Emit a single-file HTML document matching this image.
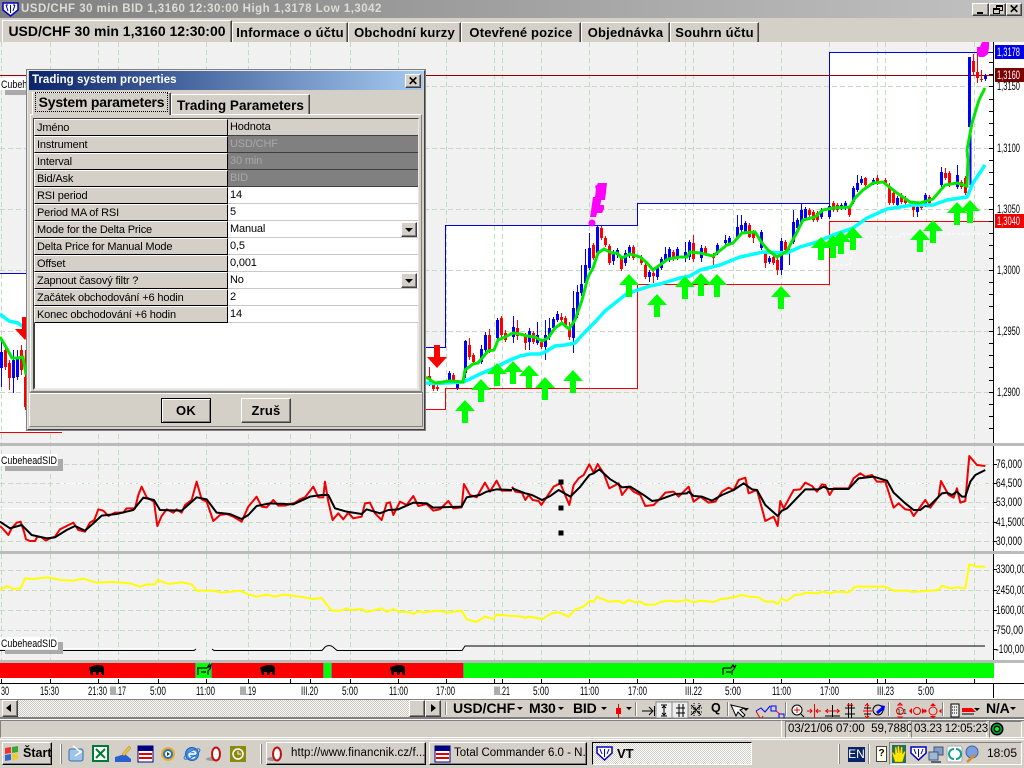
<!DOCTYPE html>
<html>
<head>
<meta charset="utf-8">
<title>VT</title>
<style>
html,body{margin:0;padding:0;width:1024px;height:768px;overflow:hidden;background:#d4d0c8;font-family:"Liberation Sans",sans-serif;color:#000}
.a{position:absolute;white-space:nowrap;box-sizing:border-box}
.raised{background:#d4d0c8;border:1px solid;border-color:#fff #404040 #404040 #fff;box-shadow:inset -1px -1px 0 #808080}
.sunk{border:1px solid;border-color:#808080 #fff #fff #808080}
.tab{background:#d4d0c8;border:1px solid;border-color:#fff #404040 #d4d0c8 #fff;border-bottom:0;box-shadow:inset -1px 0 0 #808080;font:bold 13px "Liberation Sans",sans-serif;text-align:center;letter-spacing:.18px;top:22px;height:20px;line-height:20px}
.c{font:11px/16px "Liberation Sans",sans-serif;letter-spacing:-.15px;padding-left:2px;height:17px}
.l{left:34px;width:194px;background:#d4d0c8;border:1px solid;border-color:#fff #000 #000 #fff}
.r{left:228px;width:190px;background:#fff;border-bottom:1px solid #c8c8c8}
.d{background:#808080;color:#a8a8a8;border-bottom:1px solid #404040}
.check{background:conic-gradient(#fff 25%,#d4d0c8 0 50%,#fff 0 75%,#d4d0c8 0) 0 0/2px 2px}
svg{position:absolute;left:0;top:0}
</style>
</head>
<body>

<svg width="1024" height="768" viewBox="0 0 1024 768" font-family="Liberation Sans, sans-serif">
<rect x="0" y="42" width="993" height="618" fill="#f1f1f1"/>
<rect x="993" y="42" width="31" height="641" fill="#fff"/>
<rect x="0" y="660" width="1024" height="40" fill="#fff"/>
<!-- channel fill -->
<path fill="#fff" d="M445 225H637V203H829V52H993V221H829V284H637V388H445V409H426V347H445Z"/>
<path fill="#fff" d="M0 273H62V432H0Z"/>
<!-- grid -->
<path fill="none" stroke="#c3dac3" stroke-dasharray="5 3" d="M1.5 42V660M50.5 42V660M98.5 42V660M118.5 42V660M158.5 42V660M206.5 42V660M248.5 42V660M290.5 42V660M310.5 42V660M350.5 42V660M398.5 42V660M446.5 42V660M494.5 42V660M502.5 42V660M541.5 42V660M589.5 42V660M637.5 42V660M685.5 42V660M693.5 42V660M733.5 42V660M781.5 42V660M829.5 42V660M877.5 42V660M885.5 42V660M926.5 42V660M974.5 42V660"/>
<path fill="none" stroke="#c3dac3" stroke-dasharray="5 3" d="M0 86.5H993M0 148.5H993M0 209.5H993M0 270.5H993M0 331.5H993M0 392.5H993M0 464.5H993M0 483.5H993M0 502.5H993M0 522.5H993M0 541.5H993M0 570.5H993M0 590.5H993M0 610.5H993M0 630.5H993"/>
<!-- white levels -->
<path fill="none" stroke="#fff" d="M0 508.5H985"/>
<path fill="none" stroke="#fff" stroke-dasharray="4 2" d="M0 533.5H985M60 483.5H985"/>
<path fill="none" stroke="#fff" stroke-dasharray="3 2" d="M830 265H850L853 250L860 237H900V234H990"/>
<!-- channel lines -->
<path fill="none" stroke="#0000e0" d="M426 347.5H445.5V225.5H637.5V203.5H829.5V52.5H993M0 273.5H30"/>
<path fill="none" stroke="#f00000" d="M426 409.5H445.5V388.5H637.5V284.5H829.5V221.5H993M0 432.5H62"/>
<path fill="none" stroke="#980000" d="M0 75.5H993"/>
<!-- candles -->
<g transform="translate(.5 0)" fill="none">
<path stroke="#0000ff" d="M1 340V387M13 350V393M17 350V380M449 371V382M457 380V390M465 340V378M481 345V364M485 332V352M497 318V340M513 316V343M529 328V350M537 322V345M545 320V360M549 318V340M553 317V330M557 311V322M573 291V353M577 285V318M581 265V296M585 249V285M589 233V270M597 225V256M613 250V265M617 248V258M625 250V266M629 245V258M649 270V282M657 265V280M661 257V270M665 247V262M669 247V262M677 247V260M685 242V262M689 240V260M701 245V262M717 243V255M725 235V245M729 236V245M737 215V239M741 215V232M745 221V234M761 230V250M769 256V264M781 238V275M789 248V265M793 210V244M797 218V230M801 203V225M805 207V220M821 208V219M829 204V219M841 203V210M845 201V210M853 186V204M857 175V192M861 176V185M873 178V185M897 196V207M917 205V217M925 193V207M941 167V187M957 165V189M985 74V81"/>
<path stroke="#0000ff" stroke-width="3" d="M1 352V368M13 360V378M17 357V377M449 373V380M457 382V388M465 341V373M481 349V362M485 335V350M497 320V338M513 327V337M529 331V342M537 335V343M545 335V347M549 328V337M553 319V328M557 314V320M573 308V338M577 292V315M581 284V293M585 265V283M589 248V268M597 227V253M613 254V261M617 250V255M625 253V263M629 247V255M649 272V277M657 267V277M661 259V268M665 254V260M669 249V258M677 249V257M685 252V258M689 242V257M701 248V258M717 245V253M725 240V243M729 238V243M737 227V237M741 225V230M745 223V232M761 232V248M769 258V262M781 241V270M789 250V253M793 222V242M797 220V228M801 210V223M805 209V218M821 210V217M829 206V217M841 205V208M845 203V208M853 188V202M857 183V190M861 179V183M873 180V183M897 198V205M917 207V212M925 195V205M941 172V185M957 175V187M969 57V127M985 76V79"/>
<path stroke="#0000ff" stroke-width="2" d="M970 127V185"/>
<path stroke="#ff0000" d="M5 345V370M9 360V390M21 345V375M25 350V410M429 367V386M433 383V391M437 385V391M453 373V382M469 338V360M473 353V364M489 329V353M501 316V338M505 330V342M517 320V340M525 333V350M533 331V344M541 340V349M561 313V323M565 316V327M569 322V340M593 243V260M601 226V240M605 236V247M609 244V265M621 256V271M633 245V260M641 255V265M645 263V279M653 271V283M673 250V261M693 235V262M705 246V255M713 253V267M749 223V238M753 230V243M765 251V268M773 255V265M777 258V275M785 240V252M809 208V217M813 210V222M817 211V222M833 201V212M837 203V212M849 206V217M865 177V187M877 175V185M885 178V185M889 183V205M893 191V205M901 193V204M905 196V205M913 201V217M921 203V210M929 195V205M945 168V180M949 171V187M961 180V189M965 176V195M973 54V75M977 53V83M981 70V82"/>
<path stroke="#ff0000" stroke-width="3" d="M5 350V367M9 363V378M21 350V370M25 377V407M429 376V380M433 385V389M437 387V389M453 375V380M469 345V357M473 355V362M489 335V350M501 318V335M505 333V340M517 328V336M525 335V343M533 333V342M541 342V347M561 317V320M565 318V325M569 327V337M593 245V258M601 228V238M605 238V245M609 246V263M621 258V269M633 247V258M641 257V263M645 265V277M653 273V276M673 252V259M693 243V259M705 248V253M713 255V258M749 225V237M753 232V238M765 253V263M773 257V263M777 260V270M785 242V250M809 210V215M813 212V220M817 213V220M833 203V210M837 205V210M849 208V215M865 178V185M877 178V183M885 180V183M889 188V203M893 193V203M901 195V202M905 198V203M913 203V210M921 205V208M929 197V203M945 173V178M949 173V185M961 182V187M965 178V193M973 61V72M977 72V78M981 79V80"/>
</g>
<!-- cyan MA -->
<polyline fill="none" stroke="#00ffff" stroke-width="3.5" points="0,314 9,321 18,323 26,329"/>
<polyline fill="none" stroke="#00ffff" stroke-width="3.5" points="426,383 437,383.5 463,382 470,379 480,374 490,370 500,365 510,360 520,356 530,354 540,354 545,352 555,346 565,345 575,343 585,332 595,322 605,311 615,303 625,295 635,291 650,286 660,284 670,281 680,278 690,276 700,270 720,265 740,257 763,252 787,253 800,247 817,242 833,235 853,228 867,218 887,209 913,205 933,205 947,200 967,197 973,183 985,165"/>
<!-- green MA -->
<polyline fill="none" stroke="#00e800" stroke-width="3" points="0,337 6,347 12,358 18,358 23,357 26,375"/>
<polyline fill="none" stroke="#00e800" stroke-width="3" points="426,377 435,383 450,381 463,382 465,370 473,364 478,363 483,357 488,351 494,350 498,340 505,337 513,333 520,334 527,336 535,337 542,341 548,338 555,328 562,323 569,329 575,320 582,300 588,277 593,268 598,253 604,249 612,253 617,253 622,258 630,254 640,257 647,263 653,270 660,265 668,259 680,257 687,257 690,252 700,253 713,256 727,245 733,243 742,233 755,232 762,243 768,250 777,257 787,251 797,232 803,220 815,217 823,210 833,208 850,207 855,198 863,190 873,183 883,182 897,193 910,202 920,203 933,199 945,185 957,183 967,186 968,160 967,150 972,123 979,100 985,88"/>
<!-- arrows -->
<path fill="#00ff00" d="M465 400l10 11h-7v12h-6v-12h-7zM481 379l10 11h-7v12h-6v-12h-7zM497 363l10 11h-7v12h-6v-12h-7zM513 361l10 11h-7v12h-6v-12h-7zM529 365l10 11h-7v12h-6v-12h-7zM545 377l10 11h-7v12h-6v-12h-7zM573 370l10 11h-7v12h-6v-12h-7zM629 274l10 11h-7v12h-6v-12h-7zM657 294l10 11h-7v12h-6v-12h-7zM685 276l10 11h-7v12h-6v-12h-7zM701 273l10 11h-7v12h-6v-12h-7zM717 274l10 11h-7v12h-6v-12h-7zM781 286l10 11h-7v12h-6v-12h-7zM821 237l10 11h-7v12h-6v-12h-7zM833 235l10 11h-7v12h-6v-12h-7zM841 231l10 11h-7v12h-6v-12h-7zM853 227l10 11h-7v12h-6v-12h-7zM920 229l10 11h-7v12h-6v-12h-7zM933 220l10 11h-7v12h-6v-12h-7zM957 202l10 11h-7v12h-6v-12h-7zM970 200l10 11h-7v12h-6v-12h-7z"/>
<path fill="#ff0000" d="M437 368l-10 -11h7v-12h6v12h7zM25 340l-10 -11h7v-12h6v12h4z"/>
<!-- magenta -->
<path fill="#ff00ff" d="M595 186l2 -1 1 -2h9l-1 9-1 8h-4v2l-1 3h4v4l-2 4h-5l-1 4h-6l1 -6 1 -7 1 -7h2l1 -8zM977 47h3l2 -5h7v5l-1 7-4 3h-5l-2 -4z"/>
<circle cx="592" cy="223" r="3.5" fill="#ff00ff"/>
<!-- RSI / volume -->
<g transform="translate(0 440) scale(.3333)" fill="none" stroke-linejoin="round">
<polyline stroke="#f00000" stroke-width="6" points="0,258 10,268 25,285 35,265 50,248 62,245 72,275 78,298 90,303 105,303 112,290 125,292 138,302 150,295 165,290 180,268 200,258 220,248 235,270 255,275 270,248 283,240 295,208 310,212 325,228 345,218 370,218 380,205 405,205 415,165 425,140 440,172 462,185 472,258 485,228 500,208 520,218 530,208 545,218 555,195 575,180 590,125 605,178 620,185 640,243 660,225 680,222 700,230 725,245 745,200 770,170 785,200 800,202 820,180 835,197 855,197 885,188 900,178 915,172 940,140 955,172 970,172 975,125 985,185 998,240 1015,220 1030,238 1045,218 1060,235 1085,230 1095,190 1110,188 1125,220 1145,240 1160,190 1170,187 1180,225 1200,185 1220,195 1240,168 1255,198 1280,192 1300,212 1320,208 1345,183 1360,205 1385,202 1392,132 1410,165 1430,172 1455,128 1470,155 1490,122 1505,152 1536,152"/>
<polyline stroke="#000" stroke-width="6" points="0,245 30,265 65,255 95,285 140,295 165,292 200,270 225,258 255,272 280,250 305,227 350,222 400,210 430,173 462,180 480,210 545,212 590,172 620,178 650,218 690,222 725,237 745,225 770,198 810,190 880,193 930,170 965,165 985,165 1005,205 1040,215 1085,222 1100,208 1140,220 1165,210 1195,208 1240,188 1280,190 1300,203 1385,200 1400,172 1440,165 1460,155 1490,148 1536,150"/>
<polyline stroke="#ffff00" stroke-width="6" points="0,450 20,438 40,447 62,445 75,415 100,417 130,413 150,413 180,420 220,422 250,416 290,428 340,426 390,430 420,440 440,433 465,433 472,420 505,432 545,427 575,433 590,452 640,452 665,458 720,452 745,463 770,470 800,464 825,470 850,464 900,470 940,477 965,474 995,512 1025,512 1040,505 1050,510 1085,507 1100,516 1145,505 1160,516 1180,507 1200,516 1225,516 1240,522 1260,513 1270,518 1310,512 1345,518 1385,512 1400,538 1430,546 1455,530 1480,537 1490,524 1536,528"/>
</g>
<g transform="translate(512 440) scale(.3333)" fill="none" stroke-linejoin="round">
<polyline stroke="#f00000" stroke-width="6" points="0,140 10,155 30,158 40,180 50,165 62,180 80,183 88,195 105,170 125,140 145,130 172,195 185,135 200,115 215,105 232,73 245,98 257,72 275,100 292,145 320,130 330,165 350,140 365,155 385,165 400,198 425,195 445,175 460,158 485,155 500,170 530,140 545,185 565,170 590,188 610,185 630,155 650,143 665,150 680,120 700,113 710,160 735,150 760,243 785,230 797,258 805,183 815,205 845,150 865,148 880,128 900,138 915,155 930,133 940,135 953,165 965,145 1010,145 1025,115 1045,100 1060,110 1080,105 1095,125 1120,125 1145,203 1160,190 1180,208 1195,210 1205,228 1240,180 1255,203 1280,170 1287,123 1310,165 1325,173 1335,145 1345,188 1360,183 1372,48 1395,75 1420,78"/>
<polyline stroke="#000" stroke-width="6" points="0,145 40,160 60,165 90,180 115,168 140,150 175,170 205,140 232,105 245,100 262,88 295,118 315,130 330,142 355,140 395,165 420,183 440,180 490,162 525,160 530,155 545,168 570,170 600,182 630,165 665,150 695,130 720,148 735,150 760,195 797,228 810,212 825,205 880,148 920,148 935,140 950,147 1010,147 1040,115 1085,110 1125,122 1145,158 1180,190 1205,210 1225,210 1240,198 1250,200 1290,160 1305,158 1320,165 1335,155 1350,170 1360,170 1375,125 1390,105 1420,90"/>
<polyline stroke="#ffff00" stroke-width="6" points="0,527 30,530 40,534 50,530 90,537 120,520 140,517 170,530 190,508 215,500 232,483 245,485 255,470 290,485 320,483 335,490 350,480 370,487 385,485 400,494 430,494 445,486 470,482 495,485 525,480 545,487 565,482 605,486 625,478 660,473 690,465 710,470 740,472 760,485 785,485 797,492 808,476 825,482 850,465 870,463 880,458 915,460 935,455 953,460 975,455 1010,457 1030,440 1120,440 1145,452 1190,452 1200,456 1280,450 1290,437 1315,445 1335,442 1360,445 1372,373 1395,380 1420,380"/>
</g>
<!-- squares -->
<path fill="#000" d="M558.5 479.5h5v5h-5zM558.5 505.5h5v5h-5zM558.5 530.5h5v5h-5z"/>
<!-- bottom indicator line -->
<path fill="none" stroke="#fff" d="M0 648.5H195M212 648.5H323M338 648.5H463"/>
<path fill="none" stroke="#000" d="M0 650.5H194L196 649M212 649L214 650.5H322L325 647Q329 644 333 647L337 650.5H462L465 646H985"/>
<!-- indicator labels -->
<rect x="5" y="466" width="58" height="5" fill="#aaa"/><rect x="58" y="459" width="5" height="12" fill="#aaa"/>
<rect x="0" y="454" width="57" height="12" fill="#fff"/>
<text x="1" y="464" font-size="11" textLength="56" lengthAdjust="spacingAndGlyphs">CubeheadSID</text>
<rect x="5" y="650" width="58" height="4" fill="#aaa"/><rect x="58" y="642" width="5" height="12" fill="#aaa"/>
<rect x="0" y="637" width="57" height="11" fill="#fff"/>
<text x="1" y="647" font-size="11" textLength="56" lengthAdjust="spacingAndGlyphs">CubeheadSID</text>
<rect x="5" y="90" width="21" height="5" fill="#aaa"/>
<rect x="0" y="78" width="26" height="12" fill="#fff"/>
<text x="1" y="88" font-size="11" textLength="56" lengthAdjust="spacingAndGlyphs">CubeheadSID</text>
<!-- separators -->
<rect x="0" y="443" width="1024" height="3" fill="#bbb"/>
<rect x="0" y="551" width="1024" height="3" fill="#bbb"/>
<rect x="0" y="660" width="1024" height="3" fill="#bbb"/>
<!-- price axis -->
<path stroke="#000" fill="none" d="M993.5 42V443M993.5 446V551M993.5 554V660M993.5 683V698"/>
<path stroke="#000" fill="none" d="M989 62.5h4M989 74.5h4M989 86.5h4M989 99.5h4M989 111.5h4M989 123.5h4M989 135.5h4M989 148.5h4M989 160.5h4M989 172.5h4M989 184.5h4M989 197.5h4M989 209.5h4M989 221.5h4M989 233.5h4M989 245.5h4M989 258.5h4M989 270.5h4M989 282.5h4M989 294.5h4M989 306.5h4M989 319.5h4M989 331.5h4M989 343.5h4M989 355.5h4M989 367.5h4M989 380.5h4M989 392.5h4M989 404.5h4M989 416.5h4M989 428.5h4M993 464.5h4M993 483.5h4M993 502.5h4M993 522.5h4M993 541.5h4M993 569.5h4M993 590.5h4M993 610.5h4M993 630.5h4M993 649.5h4"/>
<rect x="995" y="45" width="29" height="14" fill="#0000e8"/>
<rect x="995" y="68" width="29" height="14" fill="#7a0000"/>
<rect x="995" y="214" width="29" height="14" fill="#f00000"/>
<g font-size="11.5">
<text x="997" y="56" fill="#fff" textLength="23" lengthAdjust="spacingAndGlyphs">1,3178</text>
<text x="997" y="79" fill="#fff" textLength="23" lengthAdjust="spacingAndGlyphs">1,3160</text>
<text x="997" y="90" textLength="23" lengthAdjust="spacingAndGlyphs">1,3150</text>
<text x="997" y="152" textLength="23" lengthAdjust="spacingAndGlyphs">1,3100</text>
<text x="997" y="213" textLength="23" lengthAdjust="spacingAndGlyphs">1,3050</text>
<text x="997" y="225" fill="#fff" textLength="23" lengthAdjust="spacingAndGlyphs">1,3040</text>
<text x="997" y="274" textLength="23" lengthAdjust="spacingAndGlyphs">1,3000</text>
<text x="997" y="335" textLength="23" lengthAdjust="spacingAndGlyphs">1,2950</text>
<text x="997" y="396" textLength="23" lengthAdjust="spacingAndGlyphs">1,2900</text>
<text x="996" y="468" textLength="26" lengthAdjust="spacingAndGlyphs">76,000</text>
<text x="996" y="487" textLength="26" lengthAdjust="spacingAndGlyphs">64,500</text>
<text x="996" y="506" textLength="26" lengthAdjust="spacingAndGlyphs">53,000</text>
<text x="996" y="526" textLength="30" lengthAdjust="spacingAndGlyphs">41,5000</text>
<text x="996" y="545" textLength="26" lengthAdjust="spacingAndGlyphs">30,000</text>
<text x="996" y="573" textLength="30" lengthAdjust="spacingAndGlyphs">3300,00</text>
<text x="996" y="594" textLength="30" lengthAdjust="spacingAndGlyphs">2450,00</text>
<text x="996" y="614" textLength="30" lengthAdjust="spacingAndGlyphs">1600,00</text>
<text x="996" y="634" textLength="27" lengthAdjust="spacingAndGlyphs">750,00</text>
<text x="996" y="653" textLength="28" lengthAdjust="spacingAndGlyphs">-100,00</text>
</g>
<!-- state bar -->
<rect x="0" y="663" width="994" height="15" fill="#00ff00"/>
<path fill="#ff0000" d="M0 663H195V678H0ZM212 663H323V678H212ZM331 663H463V678H331Z"/>
<path stroke="#808080" fill="none" d="M195.5 663V678M211.5 663V678M323.5 663V678M331.5 663V678M463.5 663V678"/>
<!-- bear/bull -->
<g fill="#000">
<path d="M90 667l3 -1 3 -1 4 0 3 1 1 2 0 3 0 4h-2l-1 -3h-2l-1 3h-2l0 -3h-3l0 3h-2l-1 -4-1 -3z"/>
<path d="M261 667l3 -1 3 -1 4 0 3 1 1 2 0 3 0 4h-2l-1 -3h-2l-1 3h-2l0 -3h-3l0 3h-2l-1 -4-1 -3zM391 667l3 -1 3 -1 4 0 3 1 1 2 0 3 0 4h-2l-1 -3h-2l-1 3h-2l0 -3h-3l0 3h-2l-1 -4-1 -3z"/>
</g>
<path fill="none" stroke="#000" stroke-width="1.2" d="M197 668h10l2 -3 0 2 2 -2-1 4-2 2v4M198 668v7M201 672h5M723 668h8l2 -3 1 2 2 -2-2 4-2 2v4M723 668v7M726 672h5"/>
<!-- time axis -->
<path stroke="#000" fill="none" d="M0 683.5H1024M1.5 679V683M50.5 679V683M98.5 679V683M118.5 679V683M158.5 679V683M206.5 679V683M248.5 679V683M290.5 679V683M310.5 679V683M350.5 679V683M398.5 679V683M446.5 679V683M494.5 679V683M502.5 679V683M541.5 679V683M589.5 679V683M637.5 679V683M685.5 679V683M693.5 679V683M733.5 679V683M781.5 679V683M829.5 679V683M877.5 679V683M885.5 679V683M926.5 679V683M974.5 679V683"/>
<g font-size="11.5">
<text x="1" y="695" textLength="8" lengthAdjust="spacingAndGlyphs">30</text>
<text x="40" y="695" textLength="19" lengthAdjust="spacingAndGlyphs">15:30</text>
<text x="88" y="695" textLength="19" lengthAdjust="spacingAndGlyphs">21:30</text>
<text x="110" y="695" textLength="16" lengthAdjust="spacingAndGlyphs">III.17</text>
<text x="150" y="695" textLength="16" lengthAdjust="spacingAndGlyphs">5:00</text>
<text x="196" y="695" textLength="19" lengthAdjust="spacingAndGlyphs">11:00</text>
<text x="240" y="695" textLength="16" lengthAdjust="spacingAndGlyphs">III.19</text>
<text x="301" y="695" textLength="17" lengthAdjust="spacingAndGlyphs">III.20</text>
<text x="342" y="695" textLength="16" lengthAdjust="spacingAndGlyphs">5:00</text>
<text x="389" y="695" textLength="19" lengthAdjust="spacingAndGlyphs">11:00</text>
<text x="436" y="695" textLength="19" lengthAdjust="spacingAndGlyphs">17:00</text>
<text x="494" y="695" textLength="16" lengthAdjust="spacingAndGlyphs">III.21</text>
<text x="533" y="695" textLength="16" lengthAdjust="spacingAndGlyphs">5:00</text>
<text x="580" y="695" textLength="19" lengthAdjust="spacingAndGlyphs">11:00</text>
<text x="628" y="695" textLength="19" lengthAdjust="spacingAndGlyphs">17:00</text>
<text x="685" y="695" textLength="17" lengthAdjust="spacingAndGlyphs">III.22</text>
<text x="725" y="695" textLength="16" lengthAdjust="spacingAndGlyphs">5:00</text>
<text x="772" y="695" textLength="19" lengthAdjust="spacingAndGlyphs">11:00</text>
<text x="820" y="695" textLength="19" lengthAdjust="spacingAndGlyphs">17:00</text>
<text x="877" y="695" textLength="17" lengthAdjust="spacingAndGlyphs">III.23</text>
<text x="918" y="695" textLength="16" lengthAdjust="spacingAndGlyphs">5:00</text>
</g>
</svg>

<!-- title bar -->
<div class="a" style="left:0;top:0;width:1024px;height:18px;background:linear-gradient(90deg,#808080,#c2c2c2)"></div>
<svg width="22" height="18"><path d="M3 3H18V10L10.500 16L3 10Z" fill="#fff" stroke="#0000c0" stroke-width="1.500"/><path d="M6 5l2 6M8 5H6M10.500 5V13M13 5L15 5M15 5L13 11" stroke="#0000c0" fill="none"/></svg>
<div class="a" style="left:21px;top:2px;font:bold 11.500px/15px 'Liberation Sans',sans-serif;color:#dcdcd8;letter-spacing:.49px">USD/CHF 30 min BID 1,3160 12:30:00 High 1,3178 Low 1,3042</div>
<div class="a raised" style="left:972px;top:3px;width:17px;height:13px"><div class="a" style="left:4px;top:8px;width:6px;height:2px;background:#000"></div></div>
<div class="a raised" style="left:989px;top:3px;width:17px;height:13px"><div class="a" style="left:6px;top:1px;width:7px;height:6px;border:1px solid #000;border-top-width:2px"></div><div class="a" style="left:3px;top:4px;width:7px;height:6px;border:1px solid #000;border-top-width:2px;background:#d4d0c8"></div></div>
<div class="a raised" style="left:1006px;top:3px;width:16px;height:13px;font:bold 12px/11px 'Liberation Sans',sans-serif;text-align:center">✕</div>

<!-- tabs -->
<div class="a" style="left:0;top:18px;width:1024px;height:24px;background:#d4d0c8"></div>
<div class="a tab" style="left:2px;top:20px;width:230px;height:22px;line-height:20px;font-size:14px;letter-spacing:0">USD/CHF 30 min 1,3160 12:30:00</div>
<div class="a tab" style="left:232px;width:116px">Informace o účtu</div>
<div class="a tab" style="left:348px;width:113px">Obchodní kurzy</div>
<div class="a tab" style="left:461px;width:120px">Otevřené pozice</div>
<div class="a tab" style="left:581px;width:89px">Objednávka</div>
<div class="a tab" style="left:670px;width:89px">Souhrn účtu</div>

<!-- dialog -->
<div class="a" style="left:26px;top:69px;width:400px;height:362px;background:#d4d0c8;border:2px solid;border-color:#e8e8e4 #404040 #404040 #e8e8e4;outline:1px solid #808080;outline-offset:-1px"></div>
<div class="a" style="left:29px;top:71px;width:394px;height:19px;background:linear-gradient(90deg,#0a246a,#a6caf0);color:#fff;font:bold 11.500px/19px 'Liberation Sans',sans-serif;letter-spacing:.03px;padding-left:3px">Trading system properties</div>
<div class="a raised" style="left:405px;top:74px;width:16px;height:14px;font:bold 12px/12px 'Liberation Sans',sans-serif;text-align:center">✕</div>
<div class="a tab" style="left:32px;top:92px;width:139px;height:23px;line-height:19px;font-size:14px;letter-spacing:-.2px;z-index:2;color:#000"><span style="outline:1px dotted #000;outline-offset:1px;padding:0 2px">System parameters</span></div>
<div class="a tab" style="left:171px;top:94px;width:139px;height:21px;line-height:21px;font-size:13.500px;letter-spacing:.05px">Trading Parameters</div>
<div class="a" style="left:30px;top:114px;width:392px;height:278px;background:#d4d0c8;border:1px solid;border-color:#fff #808080 #808080 #fff"></div>
<div class="a" style="left:33px;top:118px;width:386px;height:272px;background:#fff;border:2px solid;border-color:#404040 #e8e8e4 #e8e8e4 #404040"></div>
<div class="a c l" style="top:119px">Jméno</div><div class="a c r" style="top:119px;background:#d4d0c8;border-bottom:1px solid #404040">Hodnota</div>
<div class="a c l" style="top:136px">Instrument</div><div class="a c r d" style="top:136px">USD/CHF</div>
<div class="a c l" style="top:153px">Interval</div><div class="a c r d" style="top:153px">30 min</div>
<div class="a c l" style="top:170px">Bid/Ask</div><div class="a c r d" style="top:170px">BID</div>
<div class="a c l" style="top:187px">RSI period</div><div class="a c r" style="top:187px">14</div>
<div class="a c l" style="top:204px">Period MA of RSI</div><div class="a c r" style="top:204px">5</div>
<div class="a c l" style="top:221px">Mode for the Delta Price</div><div class="a c r" style="top:221px">Manual</div>
<div class="a raised" style="left:401px;top:222px;width:16px;height:15px"><div class="a" style="left:3px;top:5px;width:0;height:0;border:4px solid transparent;border-top:4px solid #000"></div></div>
<div class="a c l" style="top:238px">Delta Price for Manual Mode</div><div class="a c r" style="top:238px">0,5</div>
<div class="a c l" style="top:255px">Offset</div><div class="a c r" style="top:255px">0,001</div>
<div class="a c l" style="top:272px">Zapnout časový filtr ?</div><div class="a c r" style="top:272px">No</div>
<div class="a raised" style="left:401px;top:273px;width:16px;height:15px"><div class="a" style="left:3px;top:5px;width:0;height:0;border:4px solid transparent;border-top:4px solid #000"></div></div>
<div class="a c l" style="top:289px">Začátek obchodování +6 hodin</div><div class="a c r" style="top:289px">2</div>
<div class="a c l" style="top:306px">Konec obchodování +6 hodin</div><div class="a c r" style="top:306px">14</div>
<div class="a" style="left:29px;top:392px;width:394px;height:35px;background:#d4d0c8;border:1px solid;border-color:#808080 #808080 #808080 #fff;box-shadow:inset 0 1px 0 #fff"></div>
<div class="a raised" style="left:161px;top:398px;width:50px;height:25px;border:1px solid #000;box-shadow:inset 1px 1px 0 #fff,inset -1px -1px 0 #808080;font:bold 13px/23px 'Liberation Sans',sans-serif;text-align:center;letter-spacing:.2px">OK</div>
<div class="a raised" style="left:241px;top:398px;width:50px;height:25px;font:bold 13px/23px 'Liberation Sans',sans-serif;text-align:center;letter-spacing:.2px">Zruš</div>

<!-- scrollbar & toolbar -->
<div class="a" style="left:0;top:699px;width:1024px;height:19px;background:#d4d0c8;border-top:1px solid #808080;border-bottom:1px solid #808080"></div>
<div class="a check" style="left:2px;top:700px;width:438px;height:17px;filter:brightness(.97)"></div>
<div class="a raised" style="left:2px;top:700px;width:16px;height:17px"><div class="a" style="left:3px;top:3px;width:0;height:0;border:4px solid transparent;border-right:5px solid #000;border-left:0"></div></div>
<div class="a raised" style="left:409px;top:700px;width:16px;height:17px"></div>
<div class="a raised" style="left:425px;top:700px;width:16px;height:17px"><div class="a" style="left:5px;top:3px;width:0;height:0;border:4px solid transparent;border-left:5px solid #000;border-right:0"></div></div>
<div class="a" style="left:445px;top:702px;width:2px;height:13px;border-left:1px solid #808080;border-right:1px solid #fff"></div>
<div class="a" style="left:453px;top:700px;font:bold 14px/17px 'Liberation Sans',sans-serif;letter-spacing:0">USD/CHF</div>
<div class="a" style="left:529px;top:700px;font:bold 14px/17px 'Liberation Sans',sans-serif;letter-spacing:-.2px">M30</div>
<div class="a" style="left:573px;top:700px;font:bold 14px/17px 'Liberation Sans',sans-serif;letter-spacing:-.2px">BID</div>
<div class="a" style="left:986px;top:700px;font:bold 14px/17px 'Liberation Sans',sans-serif;letter-spacing:-.2px">N/A</div>
<div class="a" style="left:711px;top:700px;font:bold 12.500px/17px 'Liberation Sans',sans-serif">Q</div>
<svg width="1024" height="768">
<path fill="#000" d="M517 707h6l-3 3zM558 707h6l-3 3zM601 707h6l-3 3zM626 707h6l-3 3zM1010 707h6l-3 3zM743 708h6l-3 3zM952 709h6l-3 3zM974 708h6l-3 3z"/>
<path d="M618.500 704V718" stroke="#f00000"/><rect x="616" y="708" width="5" height="6" fill="#f00000"/>
<path stroke="#808080" fill="none" d="M635.500 702V716M727.500 702V716M785.500 702V716M888.500 702V716M942.500 702V716"/>
<path stroke="#fff" fill="none" d="M636.500 702V716M728.500 702V716M786.500 702V716M889.500 702V716M943.500 702V716"/>
<path stroke="#000" fill="none" d="M642 711h10M649 707l4 4-4 4M654.500 706V716"/>
<rect x="656" y="702" width="16" height="16" fill="#eee" stroke="#888"/><rect x="672" y="702" width="16" height="16" fill="#eee" stroke="#888"/>
<path stroke="#000" fill="none" d="M661 705h6M661 716h6M664 705V716M662 708l2 -2 2 2M662 713l2 2 2 -2M676 708h9M676 713h9M679 704V717M683 704V717M691 705l10 10M701 705l-10 10"/>
<path stroke="#000" stroke-dasharray="1 1" fill="none" d="M691 708H703M691 712H703M694 703V716M699 703V716"/>
<path fill="#fff" stroke="#000" d="M731 705l5 11 2 -4 5 5 2 -2-5 -5 4 -2z"/>
<path fill="none" stroke="#f00000" d="M756 711l5 9 2 -4"/><path fill="none" stroke="#0000ff" d="M756 711l5 -3 4 4 5 -6"/>
<rect x="771" y="706" width="5" height="5" fill="none" stroke="#0000ff"/><rect x="779" y="714" width="5" height="5" fill="none" stroke="#0000ff"/><path stroke="#f00000" d="M776 711l4 3"/>
<circle cx="797" cy="710" r="5" fill="#fff" stroke="#000"/><path stroke="#f00000" d="M794 710h6M797 707v6"/><path stroke="#000" d="M801 714l3 3"/>
<path stroke="#f00000" fill="none" d="M807 711h5M821 711h-5M810 709l2 2-2 2M818 709l-2 2 2 2M814.500 704V718M825 711h15M828 709l-2 2 2 2M837 709l2 2-2 2"/><path stroke="#000" d="M832.500 705V717M825 716h15"/>
<path stroke="#000" fill="none" d="M848.500 703V719M851.500 703V719M845 708h10M845 714h10"/><path stroke="#f00000" fill="none" d="M847 706l1.500 -2 1.500 2M850 706l1.500 -2 1.500 2"/>
<path stroke="#f00000" fill="none" d="M867.500 703V719M863 711h9M865 706l2 -2 2 2M865 716l2 2 2 -2"/><path stroke="#000" fill="none" d="M864 708h7M864 714h7"/>
<circle cx="878" cy="710" r="5" fill="none" stroke="#000"/><path stroke="#0000ff" stroke-width="3" d="M877 713l6 -5"/><path fill="#0000ff" d="M880 705l5 1-1 5z"/>
<path stroke="#f00000" fill="none" d="M900 703l-2 2h4zM898 717h4l-2 2z"/><circle cx="900" cy="711" r="3.500" fill="none" stroke="#f00000"/><text x="897" y="714" font-size="7" font-family="Liberation Sans">1:1</text>
<circle cx="917" cy="711" r="3.500" fill="none" stroke="#f00000"/><path fill="#f00000" d="M909 711l3 -3v6zM925 711l-3 -3v6z"/>
<circle cx="933" cy="711" r="4" fill="none" stroke="#f00000"/><path fill="#f00000" d="M933 703l-3 3h6zM933 719l-3 -3h6zM927 711l-2.500 -2.500v5zM939 711l2.500 -2.500v5z"/>
<rect x="951" y="704" width="8" height="13" fill="#eee" stroke="#000"/><path stroke="#000" stroke-dasharray="1 1" d="M952 707h6M952 710h6M952 713h6"/>
<path fill="#f00000" d="M962 708h10l4 4h-14z"/>
<path stroke="#000" d="M962 714h12"/>
</svg>

<!-- status bar -->
<div class="a" style="left:0;top:720px;width:1024px;height:18px;background:#d4d0c8;border-top:1px solid #808080;border-left:1px solid #808080;border-bottom:1px solid #fff"></div>
<div class="a" style="left:0;top:718px;width:1024px;height:2px;background:#d4d0c8;border-bottom:1px solid #fff;border-top:1px solid #808080"></div>
<div class="a" style="left:0;top:720px;width:782px;height:18px;border-bottom:1px solid #fff;border-top:1px solid #808080;border-left:1px solid #808080;border-right:1px solid #fff"></div>
<div class="a sunk" style="left:785px;top:721px;width:124px;height:17px;font:11.500px/15px 'Liberation Sans',sans-serif;padding-left:2px">03/21/06 07:00&nbsp; 59,7880</div>
<div class="a sunk" style="left:911px;top:721px;width:76px;height:17px;font:11.500px/15px 'Liberation Sans',sans-serif;padding-left:2px;letter-spacing:-.2px">03.23 12:05:23</div>
<div class="a sunk" style="left:989px;top:721px;width:33px;height:17px"></div>
<svg width="1024" height="768"><circle cx="997" cy="729" r="6.500" fill="#000"/><circle cx="997" cy="729" r="5" fill="#0a4"/><circle cx="997" cy="729" r="3.500" fill="#000"/><circle cx="997" cy="729" r="2" fill="#0f0"/></svg>

<!-- taskbar -->
<div class="a" style="left:0;top:739px;width:1024px;height:29px;background:#d4d0c8;border-top:1px solid #fff"></div>
<div class="a raised" style="left:2px;top:742px;width:50px;height:23px;font:bold 12.500px/21px 'Liberation Sans',sans-serif;padding-left:20px;border-color:#fff #000 #000 #fff">Štart</div>
<div class="a" style="left:60px;top:744px;width:2px;height:20px;border-left:1px solid #fff;border-right:1px solid #808080;background:#fff"></div>
<div class="a" style="left:260px;top:744px;width:2px;height:20px;border-left:1px solid #fff;border-right:1px solid #808080;background:#fff"></div>
<div class="a raised" style="left:266px;top:742px;width:160px;height:23px;font:11.500px/21px 'Liberation Sans',sans-serif;letter-spacing:.08px;padding-left:24px;border-color:#fff #000 #000 #fff;overflow:hidden">http://www.financnik.cz/f...</div>
<div class="a raised" style="left:429px;top:742px;width:158px;height:23px;font:11.500px/21px 'Liberation Sans',sans-serif;padding-left:24px;border-color:#fff #000 #000 #fff;overflow:hidden">Total Commander 6.0 - N...</div>
<div class="a check" style="left:592px;top:742px;width:160px;height:23px;font:bold 13px/21px 'Liberation Sans',sans-serif;padding-left:24px;border:1px solid;border-color:#000 #fff #fff #000">VT</div>
<div class="a" style="left:838px;top:744px;width:2px;height:20px;border-left:1px solid #fff;border-right:1px solid #808080;background:#fff"></div>
<div class="a" style="left:848px;top:747px;width:17px;height:15px;background:#0a246a;color:#fff;font:12px/15px 'Liberation Sans',sans-serif;text-align:center">EN</div>
<div class="a" style="left:868px;top:744px;width:2px;height:20px;border-left:1px solid #808080;border-right:1px solid #fff"></div>
<div class="a sunk" style="left:889px;top:742px;width:133px;height:23px"></div>
<div class="a" style="left:987px;top:745px;font:12px/17px 'Liberation Sans',sans-serif">18:05</div>
<div class="a" style="left:876px;top:746px;width:11px;height:16px;background:#ffe;border:1px solid #444;font:bold 10px/14px 'Liberation Sans',sans-serif;text-align:center">?</div>
<svg width="1024" height="768">
<!-- start flag -->
<g transform="translate(4 746)"><path fill="#e33" d="M1 2l6 -1 0 6-6 1z"/><path fill="#3a3" d="M8 1l6 -1 0 6-6 1z"/><path fill="#36c" d="M1 9l6 -1 0 6-6 1z"/><path fill="#ec3" d="M8 8l6 -1 0 6-6 1z"/></g>
<!-- quick launch -->
<rect x="69" y="749" width="14" height="12" rx="2" fill="#9fc4ea" stroke="#3a6ea5"/><path d="M73 746l8 6-6 4" fill="none" stroke="#fff" stroke-width="1.500"/>
<rect x="93" y="746" width="15" height="15" fill="#fff" stroke="#007a33" stroke-width="2"/><path d="M96 749l9 9M105 749l-9 9" stroke="#007a33" stroke-width="2"/>
<path d="M115 757l10 -3 6 5v3h-16z" fill="#2a5fd0"/><path d="M122 754l7 -8 2 2-7 8z" fill="#e8c040" stroke="#a08020" stroke-width=".5"/>
<rect x="138" y="746" width="15" height="16" fill="#fff" stroke="#000080"/><rect x="138" y="746" width="15" height="5" fill="#000080"/><path d="M139 754h13M139 758h13" stroke="#e00000" stroke-width="2"/>
<circle cx="168" cy="754" r="7" fill="#e8b030"/><circle cx="168" cy="754" r="5" fill="#2a70c0"/><circle cx="168" cy="754" r="3" fill="#fff"/><path d="M167 752l3 2-3 2z" fill="#333"/>
<circle cx="192" cy="754" r="6.500" fill="#4a90e0" stroke="#1a60c0"/><path d="M189 754h7M196 754a3.500 3.500 0 1 0-1 3" fill="none" stroke="#fff" stroke-width="1.500"/><ellipse cx="192" cy="754" rx="9" ry="3" fill="none" stroke="#2a70d0" transform="rotate(-30 192 754)"/>
<ellipse cx="213" cy="759" rx="7" ry="2" fill="#999"/><ellipse cx="216" cy="754" rx="4" ry="6.500" fill="#fff" stroke="#c01010" stroke-width="2"/>
<rect x="230" y="746" width="16" height="16" fill="#8a8a10"/><circle cx="238" cy="754" r="5" fill="none" stroke="#fff" stroke-width="1.500"/><path d="M238 751v3h3" stroke="#fff" fill="none"/>
<!-- task icons -->
<ellipse cx="273" cy="759" rx="6" ry="2" fill="#999"/><ellipse cx="277" cy="754" rx="4" ry="6.500" fill="#fff" stroke="#c01010" stroke-width="2"/>
<rect x="435" y="746" width="15" height="16" fill="#fff" stroke="#000080"/><rect x="435" y="746" width="15" height="5" fill="#000080"/><path d="M436 754h13M436 758h13" stroke="#e00000" stroke-width="2"/>
<path d="M597 747H612V753L604.500 760L597 753Z" fill="#fff" stroke="#0000c0" stroke-width="1.500"/><path d="M600 749l2 5M604.500 749V757M609 749l-2 5" stroke="#0000c0" fill="none"/>
<!-- tray -->
<rect x="892" y="745" width="14" height="18" fill="#207060"/><path d="M895 762l-3 -9 1 -1 2 3 0 -8 1.500 0 1 6 0 -7 1.500 0 1 7 1 -6 1.500 0 0 7 2 -3 1 1-3 10z" fill="#ffe800" stroke="#807000" stroke-width=".4"/>
<path d="M911 747H926V753L918.500 760L911 753Z" fill="#fff" stroke="#0000c0" stroke-width="1.500"/><path d="M914 749l2 5M918.500 749V757M923 749l-2 5" stroke="#0000c0" fill="none"/>
<rect x="934" y="747" width="9" height="8" fill="#7ea0d0" stroke="#456"/><rect x="929" y="752" width="9" height="8" fill="#a0b8d8" stroke="#456"/><path d="M931 762h10" stroke="#567" stroke-width="2"/>
<rect x="947" y="746" width="15" height="16" rx="2" fill="#fff" stroke="#aaa"/><path d="M954 749a5 5 0 0 0 0 10M956 749a5 5 0 0 1 0 10" fill="none" stroke="#10a090" stroke-width="2"/>
<circle cx="972" cy="752" r="6" fill="#7aa0e0" stroke="#4060a0"/><path d="M967 762l8 -7" stroke="#d09030" stroke-width="2.500"/>
</svg>
</body>
</html>
